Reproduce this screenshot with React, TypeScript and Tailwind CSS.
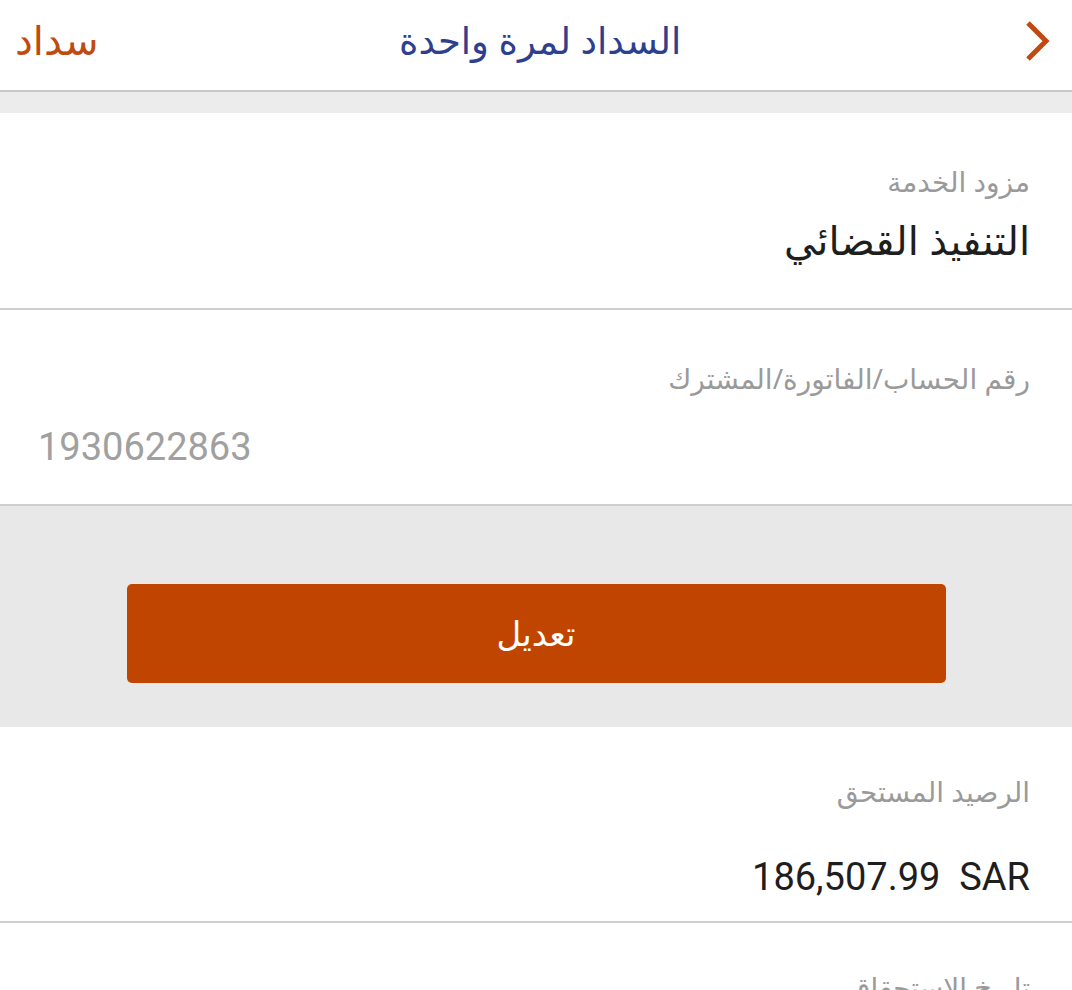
import React from 'react';

const font = { fontFamily: '"Noto Sans", "DejaVu Sans", sans-serif' };
const digits = { fontFamily: 'Roboto, "Open Sans", sans-serif' };

const Field = ({ label, top, children }: { label: string; top: string; children: React.ReactNode }) => (
  <div className={`bg-white border-b-2 border-[#cfcfcf] px-[42px] ${top}`}>
    <div className="text-[28px] leading-[36px] text-[#9a9a9a]">{label}</div>
    {children}
  </div>
);

export default function App() {
  return (
    <div dir="rtl" className="w-[1072px] h-[990px] overflow-hidden bg-white" style={font}>
      {/* Header */}
      <div className="h-[92px] flex items-center justify-between bg-white border-b-2 border-[#c9c9c9] pr-[20px] pl-[15px]">
        <svg width="30" height="42" viewBox="0 0 30 42" className="mt-[-8px]">
          <path d="M6 3 L24 21 L6 39" fill="none" stroke="#c04a10" strokeWidth="5" strokeLinejoin="miter" />
        </svg>
        <div className="text-[37px] text-[#2e3f8f] ml-[-40px] mt-[-10px]">السداد لمرة واحدة</div>
        <div className="text-[40px] text-[#c04a10] mt-[-10px]">سداد</div>
      </div>

      <div className="h-[21px] bg-[#ececec]" />

      <Field label="مزود الخدمة" top="pt-[50px]">
        <div className="text-[40px] leading-[58px] text-[#1e1e1e] pt-[12px] pb-[39px]">التنفيذ القضائي</div>
      </Field>

      <Field label="رقم الحساب/الفاتورة/المشترك" top="pt-[50px]">
        <div dir="ltr" className="text-[38px] leading-[48px] text-[#a0a0a0] pt-[27px] pb-[33px] ml-[-4px]" style={digits}>
          1930622863
        </div>
      </Field>

      {/* Action area */}
      <div className="h-[221px] bg-[#e8e8e8] flex items-center justify-center">
        <button className="w-[819px] h-[99px] rounded-[5px] bg-[#c04500] text-white text-[34px] mt-[34px]">تعديل</button>
      </div>

      <Field label="الرصيد المستحق" top="pt-[46px]">
        <div dir="ltr" className="text-right text-[38px] leading-[56px] text-[#1e1e1e] pt-[40px] pb-[16px]" style={digits}>
          186,507.99&nbsp;&nbsp;SAR
        </div>
      </Field>

      <div className="bg-white px-[42px] pt-[46px]">
        <div className="text-[28px] leading-[36px] text-[#9a9a9a]">تاريخ الاستحقاق</div>
      </div>
    </div>
  );
}
